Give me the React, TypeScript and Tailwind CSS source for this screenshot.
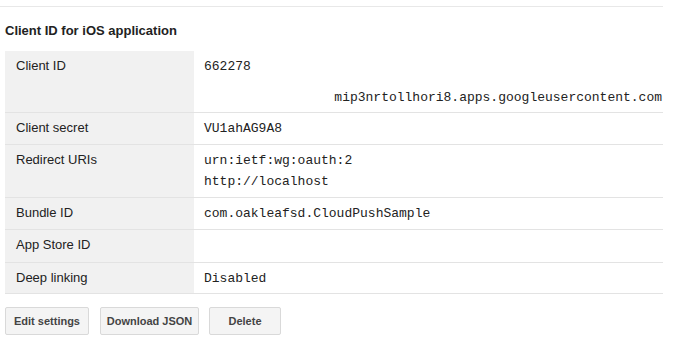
import React from "react";

const sans = { fontFamily: '"Liberation Sans", Arial, sans-serif' };

function Row({ label, children, h }: { label: string; children?: React.ReactNode; h: string }) {
  return (
    <div className={`flex border-b border-[#e3e3e3] ${h}`}>
      <div className="w-[189px] shrink-0 bg-[#f1f1f1] pl-[11px] pt-[7px] text-[13px] leading-[16px] text-[#222]">
        {label}
      </div>
      <div
        className="flex-1 pl-[10px] pr-[1px] pt-[5px] text-[13px] leading-[21px] text-[#222]"
        style={{ fontFamily: '"Liberation Mono", "Courier New", monospace' }}
      >
        {children}
      </div>
    </div>
  );
}

export default function App() {
  return (
    <div className="w-[679px] h-[346px] bg-white overflow-hidden" style={sans}>
      <div className="h-[6px]" />
      <div className="w-[663px] border-t border-[#e8e8e8]" />
      <div className="pl-[5px] mt-[16px] text-[13px] leading-[16px] font-bold text-[#222]">
        Client ID for iOS application
      </div>
      <div className="ml-[5px] mt-[12px] w-[658px]">
        <Row label="Client ID" h="h-[62px]">
          <div>662278</div>
          <div className="mt-[10px] text-right">mip3nrtollhori8.apps.googleusercontent.com</div>
        </Row>
        <Row label="Client secret" h="h-[32px]">
          VU1ahAG9A8
        </Row>
        <Row label="Redirect URIs" h="h-[53px]">
          <div>urn:ietf:wg:oauth:2</div>
          <div>http://localhost</div>
        </Row>
        <Row label="Bundle ID" h="h-[32px]">
          com.oakleafsd.CloudPushSample
        </Row>
        <Row label="App Store ID" h="h-[33px]" />
        <Row label="Deep linking" h="h-[31px]">
          Disabled
        </Row>
      </div>
      <div className="ml-[5px] mt-[13px] flex gap-[11px]">
        <button className="w-[84px] h-[28px] rounded-[2px] border border-[#d9d9d9] bg-[#f4f4f4] text-[11px] font-bold text-[#444]">
          Edit settings
        </button>
        <button className="w-[99px] h-[28px] rounded-[2px] border border-[#d9d9d9] bg-[#f4f4f4] text-[11px] font-bold text-[#444]">
          Download JSON
        </button>
        <button className="ml-[-1px] w-[72px] h-[28px] rounded-[2px] border border-[#d9d9d9] bg-[#f4f4f4] text-[11px] font-bold text-[#444]">
          Delete
        </button>
      </div>
    </div>
  );
}
